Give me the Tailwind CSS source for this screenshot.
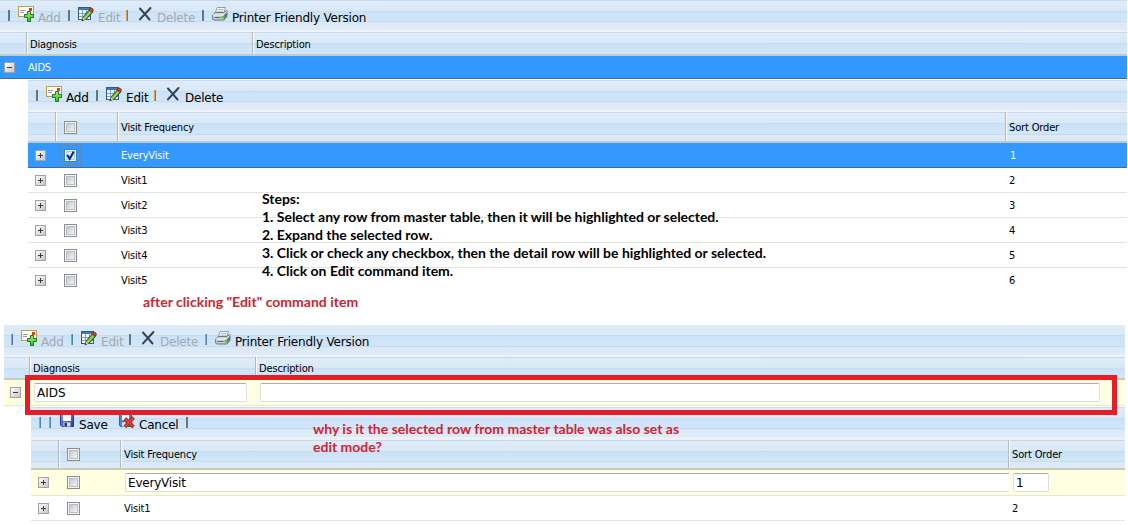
<!DOCTYPE html>
<html lang="en">
<head>
  <meta charset="UTF-8" />
  <meta name="viewport" content="width=device-width, initial-scale=1" />
  <title>Diagnosis Grid</title>
  <script src="https://cdn.jsdelivr.net/npm/@tailwindcss/browser@4"></script>
</head>
<body class="relative w-[1128px] h-[525px] overflow-hidden bg-white text-black font-['DejaVu_Sans_Condensed','DejaVu_Sans',sans-serif] text-[11px] leading-[14px] tracking-[-0.15px]">

  <!-- Icons -->
  <svg class="absolute size-0">
    <defs>
      <linearGradient id="gGreen" x1="0" y1="0" x2="0" y2="1"><stop offset="0" stop-color="#a5ea82" /><stop offset="1" stop-color="#42bd22" /></linearGradient>
      <linearGradient id="gBox" x1="0" y1="0" x2="1" y2="1"><stop offset="0" stop-color="#ffffff" /><stop offset="1" stop-color="#c3c3c3" /></linearGradient>
      <linearGradient id="gCheck" x1="0" y1="0" x2="1" y2="1"><stop offset="0" stop-color="#bfc5cc" /><stop offset="1" stop-color="#f8f8f8" /></linearGradient>
      <linearGradient id="gDisk" x1="0" y1="0" x2="1" y2="1"><stop offset="0" stop-color="#7f9fe8" /><stop offset="1" stop-color="#2a3490" /></linearGradient>
    </defs>
    <symbol id="add" viewBox="0 0 16 16">
      <rect x="0.5" y="0.5" width="15" height="10" fill="#fffdf3" stroke="#c69a4c" />
      <path d="M2 4.5h5M2 6.5h4" stroke="#8b9cb8" />
      <rect x="11" y="2" width="3" height="3" fill="#e03a22" />
      <path d="M9.5 5.5h3v3h3v3h-3v4h-3v-4h-3v-3h3z" fill="url(#gGreen)" stroke="#187a16" />
    </symbol>
    <symbol id="edit" viewBox="0 0 16 16">
      <rect x="0.5" y="1.5" width="12" height="12" fill="#f4f9ff" stroke="#35568f" />
      <path d="M1 2h11v2H1z" fill="#4a73bb" />
      <path d="M1 7.5h11M1 10.5h11M4.5 4v9M8.5 4v9" stroke="#7e9dcc" />
      <path d="M4.5 14.5l1-4 6.5-7.5 3 2.7-6.5 7.3z" fill="#67b83f" stroke="#243d1c" stroke-width="0.9" />
      <path d="M7 12l5.5-6.3" stroke="#c3ec79" />
      <path d="M11 4l1.5-2q2.7-.2 3 2.3L14 6.3z" fill="#cf3e2b" stroke="#7a2316" stroke-width="0.7" />
      <path d="M5.3 11l2.5 2.2-3.4 1.5z" fill="#e8bd77" />
      <path d="M4 13.2l1.4 1.2-1.8.8z" fill="#1b1b1b" />
    </symbol>
    <symbol id="delete" viewBox="0 0 16 16">
      <path d="M3 2.5l3 3.4 6.5 7.6M13.5 2L8.2 7.7 3 13.4" fill="none" stroke="#37424e" stroke-width="2" stroke-linecap="round" />
    </symbol>
    <symbol id="print" viewBox="0 0 16 16">
      <path d="M5.2 1.5h8.3l-2 6H3.2z" fill="#fbfcfd" stroke="#8997a4" stroke-width="0.9" />
      <path d="M6 3.5h5.5M5.3 5.3H11" stroke="#9fabb8" stroke-width="0.8" />
      <path d="M0.7 9l2.6-2.5h8.2l3.5-2v5.7l-3 3.8H1.5L.7 13z" fill="#c7cfd5" stroke="#5d6a76" stroke-width="0.9" />
      <path d="M1 9h10.5l3.2-3.7" fill="none" stroke="#f8fafb" />
      <path d="M11.7 9.3L15 6v4.3l-3 3.5z" fill="#697783" />
      <path d="M2.5 11.5h6" stroke="#5f6b75" />
      <rect x="9.5" y="10" width="3" height="2.5" fill="#43d72b" />
    </symbol>
    <symbol id="save" viewBox="0 0 16 16">
      <path d="M1.5 1.5h13v12H3l-1.5-1.5z" fill="url(#gDisk)" stroke="#2d3c91" />
      <rect x="4" y="1" width="8" height="7" fill="#f5f8ff" />
      <rect x="4.5" y="9.5" width="7" height="4" fill="#d9dfeb" />
      <rect x="5.5" y="10" width="2.5" height="3.5" fill="#26306f" />
    </symbol>
    <symbol id="cancel" viewBox="0 0 16 16">
      <path d="M.5 1.5h12v12h-11l-1-1z" fill="#438bce" stroke="#2768a8" />
      <rect x="3" y="1" width="7" height="6" fill="#f3f8fd" />
      <rect x="3" y="9.5" width="6" height="4" fill="#e2e8ee" />
      <path d="M6 5.5l8.5 8.5M14.5 4.5L6 13.8" stroke="#8e1a10" stroke-width="3.6" />
      <path d="M6.3 5.8l8 8M14.2 4.9L6.3 13.5" stroke="#e2402b" stroke-width="2.3" />
    </symbol>
    <symbol id="plus" viewBox="0 0 11 11">
      <rect x="0.5" y="0.5" width="10" height="10" fill="url(#gBox)" stroke="#a2a2a2" />
      <path d="M3 5.5h5M5.5 3v5" stroke="#3c3c3c" />
    </symbol>
    <symbol id="minus" viewBox="0 0 11 11">
      <rect x="0.5" y="0.5" width="10" height="10" fill="url(#gBox)" stroke="#a2a2a2" />
      <path d="M3 5.5h5" stroke="#3c3c3c" />
    </symbol>
    <symbol id="box" viewBox="0 0 13 13">
      <rect x="0.5" y="0.5" width="12" height="12" fill="#f4f4f4" stroke="#8b8e91" />
      <rect x="2.5" y="2.5" width="8" height="8" fill="url(#gCheck)" stroke="#b8bdc2" />
    </symbol>
    <symbol id="checked" viewBox="0 0 13 13">
      <rect x="0.5" y="0.5" width="12" height="12" fill="#e9f6fd" stroke="#4a7ea8" />
      <rect x="2.5" y="2.5" width="8" height="8" fill="#d6eefb" stroke="#a2d2ee" />
      <path d="M3.2 6l2.5 3.8L9.8 2.6" fill="none" stroke="#12256a" stroke-width="2" />
    </symbol>
  </svg>

  <!-- Master grid, before edit -->
  <section class="w-[1127px]">
    <div class="flex h-8 bg-[linear-gradient(#c8dcef_0_1px,#dfebf8_1px,#d9e8f7_11px,#c6ddf2_11px_12px,#cce2f7_12px,#d2e6f9_21px,#c6dbef_21px_22px,#dae8f6_22px,#dfebf8_30px,#f0f1f4_30px)] pl-2 font-['DejaVu_Sans',sans-serif] text-xs leading-[14px] tracking-[-0.2px] text-[#a5a9ad]">
      <div class="flex w-[60px]"><i class="mt-[10px] h-[11px] w-[2px] bg-[#66777f]"></i><svg class="mt-[6px] ml-2 size-4"><use href="#add" /></svg><span class="mt-[11px] ml-1">Add</span></div>
      <div class="flex w-[58px]"><i class="mt-[10px] h-[11px] w-[2px] bg-[#66777f]"></i><svg class="mt-[6px] ml-2 size-4"><use href="#edit" /></svg><span class="mt-[11px] ml-1">Edit</span></div>
      <div class="flex w-[76px]"><i class="mt-[10px] h-[11px] w-[2px] border-l border-[#d39a4f] bg-[#4d87ad]"></i><svg class="mt-[6px] ml-[9px] size-4"><use href="#delete" /></svg><span class="mt-[11px] ml-1">Delete</span></div>
      <div class="flex text-black"><i class="mt-[10px] h-[11px] w-[2px] bg-[#66777f]"></i><svg class="mt-[6px] ml-2 size-4"><use href="#print" /></svg><span class="mt-[11px] ml-1 whitespace-nowrap">Printer Friendly Version</span></div>
    </div>
    <div class="flex h-6 border-b-2 border-[#c9cbbf] bg-[linear-gradient(#c5d9eb_0_1px,#dfebf8_1px,#d9e8f7_11px,#c6ddf2_11px_12px,#cbe2f6_12px,#d2e6f9_22px)] *:pt-[6px]">
      <div class="w-[27px] border-r border-[#b4bac0] shadow-[1px_0_0_#fff]"></div>
      <div class="w-[226px] border-r border-[#b4bac0] pl-[3px] shadow-[1px_0_0_#fff]">Diagnosis</div>
      <div class="pl-[3px]">Description</div>
    </div>
    <div class="flex h-[23px] items-center border-b border-[#456a91] bg-[#3398ff] pl-1 text-white">
      <svg class="size-[11px]"><use href="#minus" /></svg><span class="ml-[13px] pt-px">AIDS</span>
    </div>

    <!-- Detail grid -->
    <div class="mt-px ml-7">
      <div class="flex h-8 bg-[linear-gradient(#c8dcef_0_1px,#dfebf8_1px,#d9e8f7_11px,#c6ddf2_11px_12px,#cce2f7_12px,#d2e6f9_21px,#c6dbef_21px_22px,#dae8f6_22px,#dfebf8_30px,#f0f1f4_30px)] pl-2 font-['DejaVu_Sans',sans-serif] text-xs leading-[14px] tracking-[-0.2px]">
        <div class="flex w-[60px]"><i class="mt-[10px] h-[11px] w-[2px] bg-[#66777f]"></i><svg class="mt-[6px] ml-2 size-4"><use href="#add" /></svg><span class="mt-[11px] ml-1">Add</span></div>
        <div class="flex w-[58px]"><i class="mt-[10px] h-[11px] w-[2px] bg-[#66777f]"></i><svg class="mt-[6px] ml-2 size-4"><use href="#edit" /></svg><span class="mt-[11px] ml-1">Edit</span></div>
        <div class="flex"><i class="mt-[10px] h-[11px] w-[2px] border-l border-[#d39a4f] bg-[#4d87ad]"></i><svg class="mt-[6px] ml-[9px] size-4"><use href="#delete" /></svg><span class="mt-[11px] ml-1">Delete</span></div>
      </div>
      <div class="flex h-[31px] border-b-2 border-[#bfc8cd] bg-[linear-gradient(#c5d9eb_0_1px,#dfebf8_1px,#d9e8f7_11px,#c6ddf2_11px_12px,#cbe2f6_12px,#d2e6f9_22px,#c6dbef_22px_23px,#dce9f7_23px)] *:pt-[9px]">
        <div class="w-7 border-r border-[#b4bac0] shadow-[1px_0_0_#fff]"></div>
        <div class="w-[62px] border-r border-[#b4bac0] pl-2 shadow-[1px_0_0_#fff]"><svg class="size-[13px]"><use href="#box" /></svg></div>
        <div class="w-[888px] border-r border-[#b4bac0] pl-[3px] shadow-[1px_0_0_#fff]">Visit Frequency</div>
        <div class="pl-[3px]">Sort Order</div>
      </div>
      <div class="flex h-[25px] items-center border-b border-[#456a91] bg-[#3398ff] pl-[7px] text-white">
        <svg class="size-[11px]"><use href="#plus" /></svg>
        <div class="ml-[14px] flex size-[21px] items-center justify-center outline-1 -outline-offset-1 outline-dotted outline-[#6d7f92]"><svg class="size-[13px]"><use href="#checked" /></svg></div>
        <span class="ml-10 w-[889px] pt-px">EveryVisit</span><span class="pt-px">1</span>
      </div>
      <div class="flex h-[25px] items-center border-b border-[#e5e5e0] pl-[7px]"><svg class="size-[11px]"><use href="#plus" /></svg><svg class="ml-[18px] size-[13px]"><use href="#box" /></svg><span class="ml-11 w-[888px] pt-px">Visit1</span><span class="pt-px">2</span></div>
      <div class="flex h-[25px] items-center border-b border-[#e5e5e0] pl-[7px]"><svg class="size-[11px]"><use href="#plus" /></svg><svg class="ml-[18px] size-[13px]"><use href="#box" /></svg><span class="ml-11 w-[888px] pt-px">Visit2</span><span class="pt-px">3</span></div>
      <div class="flex h-[25px] items-center border-b border-[#e5e5e0] pl-[7px]"><svg class="size-[11px]"><use href="#plus" /></svg><svg class="ml-[18px] size-[13px]"><use href="#box" /></svg><span class="ml-11 w-[888px] pt-px">Visit3</span><span class="pt-px">4</span></div>
      <div class="flex h-[25px] items-center border-b border-[#e5e5e0] pl-[7px]"><svg class="size-[11px]"><use href="#plus" /></svg><svg class="ml-[18px] size-[13px]"><use href="#box" /></svg><span class="ml-11 w-[888px] pt-px">Visit4</span><span class="pt-px">5</span></div>
      <div class="flex h-[25px] items-center pl-[7px]"><svg class="size-[11px]"><use href="#plus" /></svg><svg class="ml-[18px] size-[13px]"><use href="#box" /></svg><span class="ml-11 w-[888px]">Visit5</span><span>6</span></div>
    </div>
  </section>

  <p class="ml-[143px] h-8 font-[Lato,sans-serif] text-[14px] leading-[18px] font-bold tracking-[0.02px] text-[#d1232f]">after clicking "Edit" command item</p>

  <!-- Master grid, edit mode -->
  <section class="ml-1 w-[1121px]">
    <div class="flex h-8 bg-[linear-gradient(#dfebf8,#d9e8f7_10px,#c6ddf2_10px_11px,#cce2f7_11px,#d2e6f9_21px,#c6dbef_21px_22px,#dae8f6_22px,#dfebf8_30px,#f0f1f4_30px)] pl-[7px] font-['DejaVu_Sans',sans-serif] text-xs leading-[14px] tracking-[-0.2px] text-[#a5a9ad]">
      <div class="flex w-[60px]"><i class="mt-[9px] h-[11px] w-[2px] border-l border-[#d39a4f] bg-[#4d6f94]"></i><svg class="mt-[5px] ml-2 size-4"><use href="#add" /></svg><span class="mt-[10px] ml-1">Add</span></div>
      <div class="flex w-[58px]"><i class="mt-[9px] h-[11px] w-[2px] border-l border-[#d39a4f] bg-[#4d87ad]"></i><svg class="mt-[5px] ml-2 size-4"><use href="#edit" /></svg><span class="mt-[10px] ml-1">Edit</span></div>
      <div class="flex w-[76px]"><i class="mt-[9px] h-[11px] w-[2px] bg-[#66777f]"></i><svg class="mt-[5px] ml-[9px] size-4"><use href="#delete" /></svg><span class="mt-[10px] ml-1">Delete</span></div>
      <div class="flex text-black"><i class="mt-[9px] h-[11px] w-[2px] border-l border-[#d39a4f] bg-[#4d87ad]"></i><svg class="mt-[5px] ml-2 size-4"><use href="#print" /></svg><span class="mt-[10px] ml-1 whitespace-nowrap">Printer Friendly Version</span></div>
    </div>
    <div class="flex h-[23px] border-b-2 border-[#cccbb6] bg-[linear-gradient(#c5d9eb_0_1px,#dfebf8_1px,#d9e8f7_11px,#c6ddf2_11px_12px,#cbe2f6_12px,#d2e6f9_22px)] *:pt-[5px]">
      <div class="w-[26px] border-r border-[#b4bac0] shadow-[1px_0_0_#fff]"></div>
      <div class="w-[226px] border-r border-[#b4bac0] pl-[3px] shadow-[1px_0_0_#fff]">Diagnosis</div>
      <div class="pl-[3px]">Description</div>
    </div>
    <div class="flex h-[26px] items-center border-b border-[#e8e7d2] bg-[#ffffe1] pl-[6px] font-['DejaVu_Sans',sans-serif] text-xs tracking-normal">
      <svg class="size-[11px]"><use href="#minus" /></svg>
      <div class="ml-[13px] flex h-[19px] w-[213px] items-center rounded-[2px] border border-[#dedfe2] border-t-[#abadb3] bg-white pt-px pl-[2px]">AIDS</div>
      <div class="ml-[13px] h-[19px] w-[840px] rounded-[2px] border border-[#dedfe2] border-t-[#abadb3] bg-white"></div>
    </div>

    <!-- Detail grid -->
    <div class="mt-px ml-[27px]">
      <div class="flex h-[33px] bg-[linear-gradient(#c8dcef_0_1px,#dfebf8_1px,#d9e8f7_11px,#c6ddf2_11px_12px,#cce2f7_12px,#d2e6f9_21px,#c6dbef_21px_22px,#dae8f6_22px,#dfebf8_30px,#f0f1f4_30px)] pl-2 font-['DejaVu_Sans',sans-serif] text-xs leading-[14px] tracking-[-0.2px]">
        <i class="mt-[10px] h-[11px] w-[2px] border-l border-[#d39a4f] bg-[#4d87ad]"></i>
        <div class="ml-2 flex w-[70px]"><i class="mt-[10px] h-[11px] w-[2px] border-l border-[#d39a4f] bg-[#4d87ad]"></i><svg class="mt-[6px] ml-2 size-4"><use href="#save" /></svg><span class="mt-[11px] ml-1">Save</span></div>
        <div class="flex w-[67px]"><svg class="mt-[6px] size-4"><use href="#cancel" /></svg><span class="mt-[11px] ml-1">Cancel</span></div>
        <i class="mt-[10px] h-[11px] w-[2px] bg-[#66777f]"></i>
      </div>
      <div class="flex h-[30px] border-b-2 border-[#cccbb6] bg-[linear-gradient(#c5d9eb_0_1px,#dfebf8_1px,#d9e8f7_11px,#c6ddf2_11px_12px,#cbe2f6_12px,#d2e6f9_21px,#c6dbef_21px_22px,#dce9f7_22px)] *:pt-2">
        <div class="w-7 border-r border-[#b4bac0] shadow-[1px_0_0_#fff]"></div>
        <div class="w-[62px] border-r border-[#b4bac0] pl-2 shadow-[1px_0_0_#fff]"><svg class="size-[13px]"><use href="#box" /></svg></div>
        <div class="w-[888px] border-r border-[#b4bac0] pl-[3px] shadow-[1px_0_0_#fff]">Visit Frequency</div>
        <div class="pl-[3px]">Sort Order</div>
      </div>
      <div class="flex h-[26px] items-center border-b border-[#e8e7d2] bg-[#ffffe1] pl-[7px] font-['DejaVu_Sans',sans-serif] text-xs tracking-[-0.2px]">
        <svg class="size-[11px]"><use href="#plus" /></svg><svg class="ml-[18px] size-[13px]"><use href="#box" /></svg>
        <div class="ml-[45px] flex h-[19px] w-[884px] items-center rounded-l-[2px] border border-r-0 border-[#dedfe2] border-t-[#abadb3] bg-white pt-px pl-[2px]">EveryVisit</div>
        <div class="ml-1 flex h-[19px] w-9 items-center rounded-[2px] border border-[#dedfe2] border-t-[#abadb3] bg-white pt-px pl-[2px]">1</div>
      </div>
      <div class="flex h-[25px] items-center border-b border-[#e5e5e0] pl-[7px]"><svg class="size-[11px]"><use href="#plus" /></svg><svg class="ml-[18px] size-[13px]"><use href="#box" /></svg><span class="ml-11 w-[888px] pt-px">Visit1</span><span class="pt-px">2</span></div>
    </div>
  </section>

  <!-- Notes drawn over the grids -->
  <div class="absolute top-[190px] left-[262px] font-[Lato,sans-serif] text-[14px] leading-[18px] font-bold tracking-[-0.02px] whitespace-nowrap">
    <p>Steps:</p>
    <p>1. Select any row from master table, then it will be highlighted or selected.</p>
    <p>2. Expand the selected row.</p>
    <p>3. Click or check any checkbox, then the detail row will be highlighted or selected.</p>
    <p>4. Click on Edit command item.</p>
  </div>
  <div class="absolute top-[375px] left-[25px] h-10 w-[1092px] border-5 border-[#e81c24]"></div>
  <p class="absolute top-[420px] left-[313px] font-[Lato,sans-serif] text-[14px] leading-[18px] font-bold tracking-normal whitespace-nowrap text-[#d1232f]">why is it the selected row from master table was also set as<br />edit mode?</p>
</body>
</html>
